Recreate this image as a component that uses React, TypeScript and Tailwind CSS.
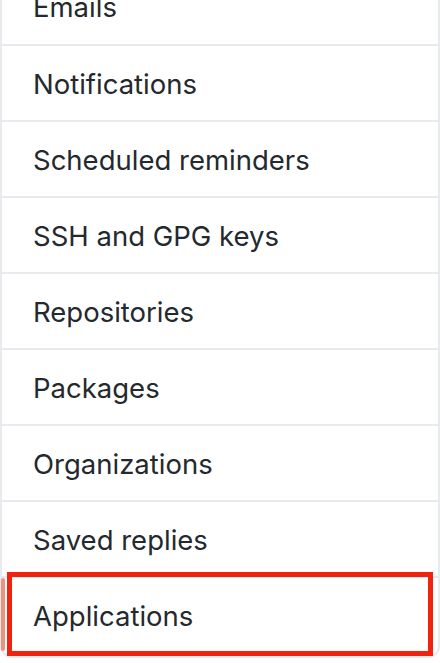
const items = [
  "Emails",
  "Notifications",
  "Scheduled reminders",
  "SSH and GPG keys",
  "Repositories",
  "Packages",
  "Organizations",
  "Saved replies",
  "Applications",
];

export default function App() {
  return (
    <div className="w-[440px] h-[663px] overflow-hidden bg-white font-['Inter',sans-serif]">
      <nav className="-mt-[32px] pb-[4px] relative border-x-2 border-b-2 border-[#e8eaed] rounded-b-[12px]">
        {items.map((label, i) => {
          const selected = label === "Applications";
          return (
            <a
              key={label}
              className={
                "relative flex items-center h-[76px] pt-[4px] pl-[31px] text-[27.5px] text-[#24292e] " +
                (i > 0 ? "border-t-2 border-[#e8eaed]" : "")
              }
            >
              {selected && (
                <span className="absolute -left-[1px] top-[0px] h-[73px] w-[4px] rounded-sm bg-[#ec9280]" />
              )}
              {label}
            </a>
          );
        })}
        <div className="absolute left-[5px] right-[5px] bottom-[0px] h-[84px] border-[5px] border-[#f0230f]" />
      </nav>
    </div>
  );
}
